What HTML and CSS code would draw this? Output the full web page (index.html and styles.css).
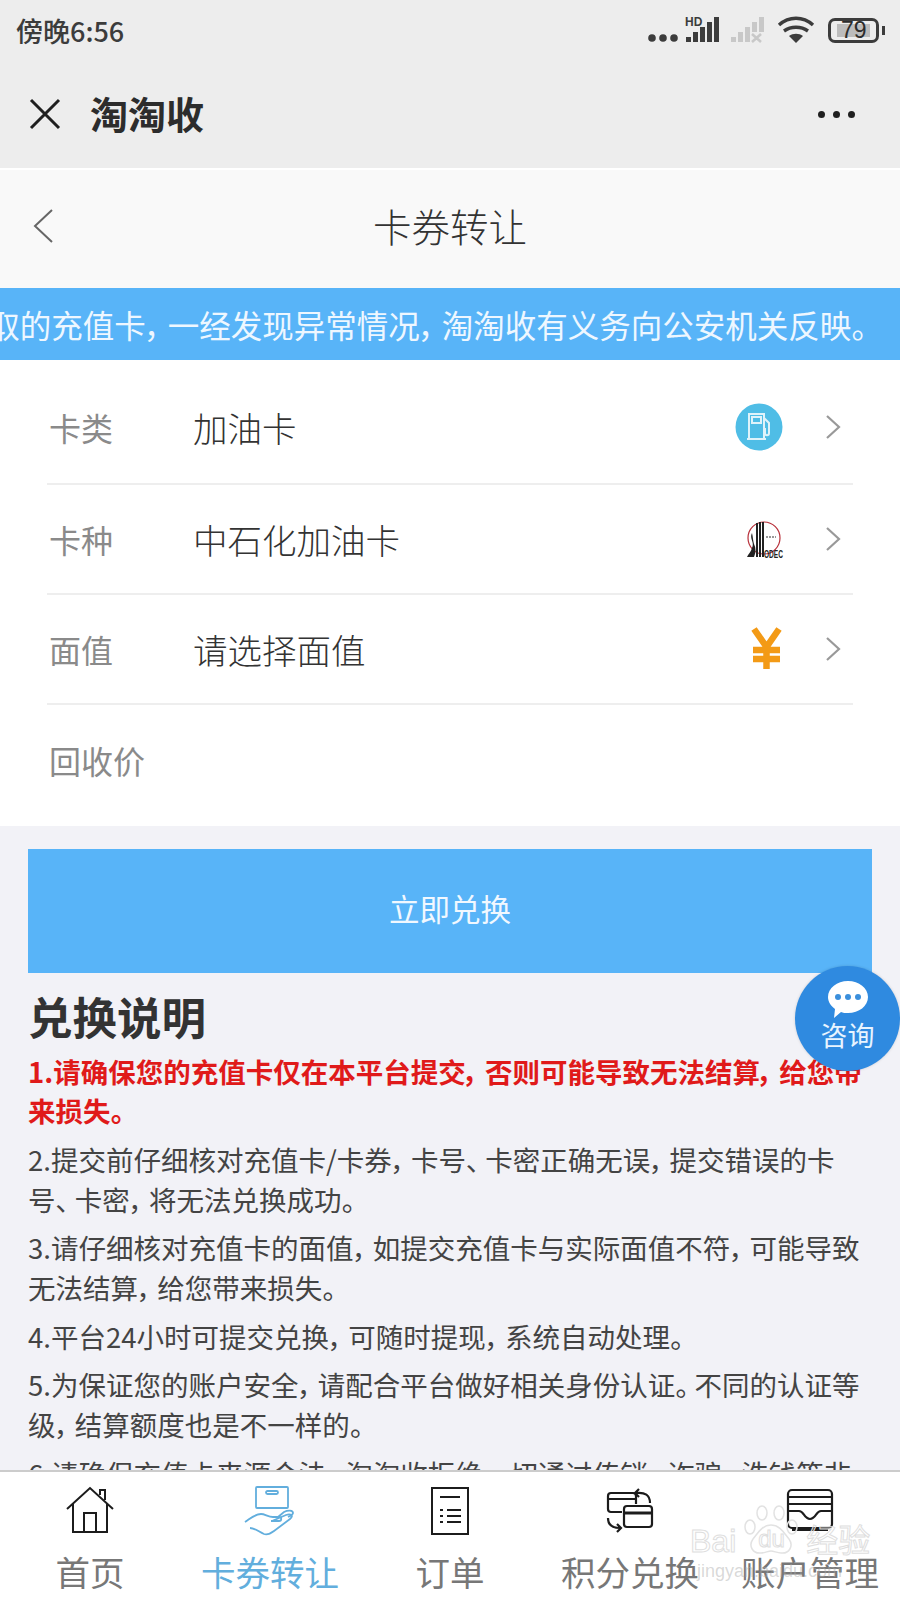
FILE: index.html
```html
<!DOCTYPE html>
<html lang="zh-CN">
<head>
  <meta charset="UTF-8">
  <meta name="viewport" content="width=device-width, initial-scale=1.0">
  <title>卡券转让</title>
  <link rel="stylesheet" href="styles.css">
</head>
<body>

<div class="phone">
  <div class="top">
    <div class="status">
      <span class="time">傍晚6:56</span>
      <svg class="status-icons" width="174" height="32" viewBox="0 0 174 32">
        <g fill="#3c3c3c">
          <circle cx="4" cy="24" r="3.800"/><circle cx="15" cy="24" r="3.800"/><circle cx="26" cy="24" r="3.800"/>
          <rect x="38" y="23" width="5" height="5"/><rect x="45" y="18" width="5" height="10"/><rect x="52" y="13" width="5" height="15"/><rect x="59" y="8" width="5" height="20"/><rect x="66" y="3" width="5" height="25"/>
        </g>
        <text x="37" y="12" class="hd">HD</text>
        <g fill="#c8c8c8">
          <rect x="83" y="23" width="5" height="5"/><rect x="90" y="18" width="5" height="10"/><rect x="97" y="13" width="5" height="15"/><rect x="104" y="8" width="5" height="10"/><rect x="111" y="3" width="5" height="15"/>
          <path d="M104 20l9 8M113 20l-9 8" stroke="#c8c8c8" stroke-width="2.600" fill="none"/>
        </g>
        <g fill="none" stroke="#3c3c3c" stroke-width="3.400">
          <path d="M131 11c10-9 24-9 34 0"/><path d="M136 17c7-5 17-5 24 0"/>
        </g>
        <path d="M141 22c4-3 10-3 14 0l-7 7z" fill="#3c3c3c"/>
      </svg>
      <div class="battery"><span class="battery-level"></span><span class="battery-num">79</span></div>
    </div>
    <div class="titlebar">
      <svg class="close-icon" width="32" height="32" viewBox="0 0 32 32"><path d="M2 2l28 28M30 2L2 30" stroke="#1f1f1f" stroke-width="3" fill="none"/></svg>
      <span class="app-name">淘淘收</span>
      <span class="more"><i></i><i></i><i></i></span>
    </div>
  </div>

  <div class="subhead">
    <svg class="back" width="22" height="36" viewBox="0 0 22 36"><path d="M20 2L3 18l17 16" stroke="#666" stroke-width="2" fill="none"/></svg>
    <h1>卡券转让</h1>
  </div>

  <div class="notice"><span>取的充值卡，&thinsp;一经发现异常情况，&thinsp;淘淘收有义务向公安机关反映。</span></div>

  <div class="form">
    <div class="row">
      <span class="label">卡类</span>
      <span class="value">加油卡</span>
      <svg class="row-icon" width="48" height="48" viewBox="0 0 48 48">
        <circle cx="20" cy="24" r="23.500" fill="#4fbde6"/>
        <g fill="none" stroke="#dff3fa" stroke-width="2">
          <path d="M10 35V11h15v24M8 36h19"/><rect x="13" y="14" width="9" height="6"/>
          <path d="M25 15l5 5v10c0 3-4 3-4 0v-4h-1"/>
        </g>
      </svg>
      <svg class="chevron" width="16" height="26" viewBox="0 0 16 26"><path d="M2 2l12 11L2 24" stroke="#999" stroke-width="2.200" fill="none"/></svg>
    </div>
    <div class="row">
      <span class="label">卡种</span>
      <span class="value">中石化加油卡</span>
      <svg class="row-icon" width="48" height="48" viewBox="0 0 48 48">
        <circle cx="25" cy="23" r="16" fill="#fff" stroke="#b8303a" stroke-width="1.200"/>
        <path d="M13 18c-3 6 3 9 0 15-1 4-4 6-5 9h7c2-5 2-9 0-13-1-3-1-7-2-11z" fill="#222"/>
        <path d="M18 8v34M21 7v35M24 7v35" stroke="#222" stroke-width="2"/>
        <text x="25" y="43" class="sinopec" textLength="19" lengthAdjust="spacingAndGlyphs">ODEC</text>
        <path d="M27 22h10" stroke="#777" stroke-width="1.500" stroke-dasharray="2 1"/>
      </svg>
      <svg class="chevron" width="16" height="26" viewBox="0 0 16 26"><path d="M2 2l12 11L2 24" stroke="#999" stroke-width="2.200" fill="none"/></svg>
    </div>
    <div class="row">
      <span class="label">面值</span>
      <span class="value">请选择面值</span>
      <svg class="row-icon" width="48" height="48" viewBox="0 0 48 48">
        <path d="M15 4l12.500 18L40 4M27.500 22v22M14 25h27M14 34h27" stroke="#f39a16" stroke-width="6.500" fill="none"/>
      </svg>
      <svg class="chevron" width="16" height="26" viewBox="0 0 16 26"><path d="M2 2l12 11L2 24" stroke="#999" stroke-width="2.200" fill="none"/></svg>
    </div>
    <div class="row">
      <span class="label">回收价</span>
    </div>
  </div>

  <div class="content">
    <button class="submit">立即兑换</button>
    <h2>兑换说明</h2>
    <p class="warn">1.请确保您的充值卡仅在本平台提交，&thinsp;否则可能导致无法结算，&thinsp;给您带来损失。</p>
    <p>2.提交前仔细核对充值卡/卡券，&thinsp;卡号、&thinsp;卡密正确无误，&thinsp;提交错误的卡号、&thinsp;卡密，&thinsp;将无法兑换成功。</p>
    <p>3.请仔细核对充值卡的面值，&thinsp;如提交充值卡与实际面值不符，&thinsp;可能导致无法结算，&thinsp;给您带来损失。</p>
    <p>4.平台24小时可提交兑换，&thinsp;可随时提现，&thinsp;系统自动处理。</p>
    <p>5.为保证您的账户安全，&thinsp;请配合平台做好相关身份认证。&thinsp;不同的认证等级，&thinsp;结算额度也是不一样的。</p>
    <p>6.请确保充值卡来源合法，&thinsp;淘淘收拒绝一切通过传销、&thinsp;诈骗、&thinsp;洗钱等非法途径获取的充值卡。</p>
  </div>

  <div class="consult">
    <svg width="42" height="40" viewBox="0 0 42 40">
      <path d="M21 1c11 0 20 7 20 16s-9 16-20 16c-3 0-5 0-7-1l-7 6 1-9C4 26 1 22 1 17 1 8 10 1 21 1z" fill="#fff"/>
      <circle cx="11" cy="17" r="3" fill="#3b8fdc"/><circle cx="21" cy="17" r="3" fill="#3b8fdc"/><circle cx="31" cy="17" r="3" fill="#3b8fdc"/>
    </svg>
    <span>咨询</span>
  </div>

  <nav class="tabs">
    <div class="tab">
      <svg width="50" height="50" viewBox="0 0 50 50" fill="none" stroke="#1c1c1c" stroke-width="2">
        <path d="M2 23L25 2l23 21M8 18v28h34V18M19 46V27h12v19M35 9V4h5v10"/>
      </svg>
      <span>首页</span>
    </div>
    <div class="tab active">
      <svg width="52" height="52" viewBox="0 0 52 52" fill="none" stroke="#62aedd" stroke-width="1.800">
        <rect x="12" y="2" width="32" height="21" rx="1"/><rect x="22" y="6" width="12" height="3" rx="1.500"/>
        <path d="M1 37c6-4 10-8 16-8 4 0 7 3 12 3h6c3 0 3 4 0 4h-8M28 36l14-6c5-2 8 1 4 4L30 46c-4 3-7 4-10 3-5-2-9-6-14-6M34 32l6-5c4-2 9-2 9 1 0 2-3 3-5 4"/>
      </svg>
      <span>卡券转让</span>
    </div>
    <div class="tab">
      <svg width="40" height="50" viewBox="0 0 40 50" fill="none" stroke="#1c1c1c" stroke-width="2">
        <rect x="2" y="2" width="36" height="46"/>
        <path d="M10 11h20M10 24h3M17 24h14M10 30h3M17 30h14M10 36h3M17 36h14"/>
      </svg>
      <span>订单</span>
    </div>
    <div class="tab">
      <svg width="48" height="48" viewBox="0 0 48 48" fill="none" stroke="#1c1c1c" stroke-width="2.200">
        <path d="M16 25H5a3 3 0 0 1-3-3V9a3 3 0 0 1 3-3h22a3 3 0 0 1 3 3v8M2 12h28"/>
        <rect x="18" y="19" width="28" height="21" rx="3"/><path d="M18 26h28" stroke-width="3"/>
        <path d="M33 2l-4 4 4 4M30 6c9-1 14 2 14 10M2 31c0 7 4 10 12 10M11 37l4 4-4 4"/>
      </svg>
      <span>积分兑换</span>
    </div>
    <div class="tab">
      <svg width="48" height="46" viewBox="0 0 48 46" fill="none" stroke="#1c1c1c" stroke-width="2.200">
        <rect x="2" y="2" width="44" height="38" rx="4"/>
        <path d="M2 9h44M2 16h44M2 23h11c5 0 5 8 11 8s6-8 11-8h11M6 42h36"/>
      </svg>
      <span>账户管理</span>
    </div>
  </nav>

  <div class="watermark">
    <div class="wm-logo">
      <span>Bai</span>
      <span class="wm-paw">
        <svg width="58" height="54" viewBox="0 0 58 54" fill="none" stroke="#e2e2e2" stroke-width="1.500">
          <ellipse cx="8" cy="24" rx="5" ry="7"/><ellipse cx="20" cy="10" rx="5" ry="7"/><ellipse cx="37" cy="10" rx="5" ry="7"/><ellipse cx="50" cy="24" rx="5" ry="7"/>
          <path d="M29 22c9 0 13 8 18 14 5 7 0 15-8 14-4 0-7-2-10-2s-6 2-10 2c-8 1-13-7-8-14 5-6 9-14 18-14z"/>
        </svg>
        <b>du</b>
      </span>
      <span>经验</span>
    </div>
    <span class="wm-url">jingyan.baidu.com</span>
  </div>
</div>

</body>
</html>
```

FILE: styles.css
```css
body {
  margin: 0;
  padding: 0;
  background-color: #fff;
  font-family: "Noto Sans CJK SC", "Noto Sans", sans-serif;
  font-feature-settings: "palt";
}
h1, h2, p {
  margin: 0;
  font-weight: normal;
}
.phone {
  position: relative;
  width: 900px;
  height: 1600px;
  overflow: hidden;
  display: flex;
  flex-direction: column;
}

/* status bar and app title */
.top {
  height: 168px;
  flex: none;
  background-color: #ededed;
}
.status {
  height: 60px;
  display: flex;
  align-items: center;
  padding: 0 21px 0 16px;
  color: #3c3c3c;
}
.time {
  font-size: 27px;
  font-weight: 500;
  flex: 1;
}
.status-icons {
  margin-right: 6px;
}
.hd {
  font-family: "Liberation Sans", sans-serif;
  font-size: 12px;
  font-weight: bold;
  fill: #3c3c3c;
}
.battery {
  position: relative;
  width: 45px;
  height: 19px;
  border: 3px solid #3c3c3c;
  border-radius: 7px;
}
.battery::after {
  content: "";
  position: absolute;
  right: -9px;
  top: 5px;
  width: 3px;
  height: 9px;
  background-color: #3c3c3c;
}
.battery-level {
  position: absolute;
  left: 6px;
  top: 3px;
  width: 33px;
  height: 13px;
  background-color: #bcbcbc;
}
.battery-num {
  position: absolute;
  left: 10px;
  top: -5px;
  font-size: 23px;
  line-height: 28px;
  font-family: "Liberation Sans", sans-serif;
  color: #2c2c2c;
}
.titlebar {
  height: 108px;
  display: flex;
  align-items: center;
  padding: 0 45px 0 29px;
}
.app-name {
  flex: 1;
  margin-left: 29px;
  margin-bottom: 4px;
  font-size: 38px;
  font-weight: 700;
  color: #2c2c2c;
}
.more {
  display: flex;
  gap: 8px;
}
.more i {
  width: 7px;
  height: 7px;
  border-radius: 50%;
  background-color: #1f1f1f;
}

/* page header */
.subhead {
  position: relative;
  flex: none;
  height: 118px;
  margin-top: 2px;
  padding-bottom: 8px;
  box-sizing: border-box;
  display: flex;
  align-items: center;
  justify-content: center;
  background-color: #f9f9f9;
}
.subhead h1 {
  font-size: 38.500px;
  font-weight: 300;
  color: #333;
}
.back {
  position: absolute;
  left: 32px;
  top: 38px;
}
.notice {
  flex: none;
  height: 72px;
  display: flex;
  align-items: center;
  justify-content: flex-end;
  overflow: hidden;
  padding-right: 33px;
  background-color: #58b4f8;
  color: #eef7ff;
  font-size: 31.500px;
  white-space: nowrap;
}

/* form rows */
.form {
  flex: none;
  height: 466px;
  padding: 0 47px;
  box-sizing: border-box;
  background-color: #fff;
}
.row {
  height: 110px;
  display: flex;
  align-items: center;
  border-bottom: 2px solid #eee;
  box-sizing: border-box;
  padding-right: 12px;
}
.row:first-child {
  height: 125px;
  padding-top: 10px;
}
.row:last-child {
  height: 120px;
  padding-bottom: 10px;
  border-bottom: none;
}
.label {
  width: 144px;
  flex: none;
  padding-left: 2px;
  font-size: 32px;
  color: #8a8a8a;
}
.value {
  flex: 1;
  font-size: 34.500px;
  font-weight: 300;
  color: #333;
}
.row-icon {
  margin-right: 38px;
  overflow: visible;
}
.sinopec {
  font-family: "Liberation Sans", sans-serif;
  font-size: 10px;
  font-weight: bold;
  fill: #222;
}

/* button and instructions */
.content {
  flex: 1;
  min-height: 0;
  overflow: hidden;
  padding: 23px 28px 0;
  background-color: #f2f2f7;
  font-size: 27.500px;
  line-height: 40px;
  color: #444;
}
.submit {
  display: block;
  width: 100%;
  height: 124px;
  padding: 0 0 6px;
  border: none;
  background-color: #58b4f8;
  color: #f1f8ff;
  font-family: inherit;
  font-feature-settings: inherit;
  font-size: 30.500px;
}
.content h2 {
  margin-top: 11px;
  margin-bottom: 4px;
  font-size: 44.500px;
  line-height: 64px;
  font-weight: 700;
  color: #333;
}
.content p {
  margin-bottom: 8.500px;
}
.content .warn {
  font-weight: 700;
  line-height: 39px;
  color: #e01a1a;
}

/* floating consult button */
.consult {
  position: absolute;
  left: 795px;
  top: 966px;
  width: 105px;
  height: 105px;
  border-radius: 50%;
  background-color: #2f8ae0;
  box-shadow: 0 0 3px rgba(0, 0, 0, 0.15);
  display: flex;
  flex-direction: column;
  align-items: center;
  color: #e8f4ff;
  font-size: 27px;
  line-height: 32px;
  padding-top: 14px;
  box-sizing: border-box;
}
.consult svg {
  margin-bottom: -1px;
}

/* bottom tabs */
.tabs {
  flex: none;
  height: 130px;
  box-sizing: border-box;
  border-top: 2px solid #ccc;
  display: grid;
  grid-template-columns: repeat(5, 1fr);
  background-color: #fff;
}
.tab {
  display: flex;
  flex-direction: column;
  align-items: center;
  color: #777;
  font-size: 34.500px;
  line-height: 46px;
  padding-top: 13px;
  white-space: nowrap;
}
.tab svg {
  height: 52px;
  margin-bottom: 11px;
}
.tab.active {
  color: #62aedd;
}

/* photo watermark */
.watermark {
  position: absolute;
  left: 690px;
  top: 1503px;
  display: flex;
  flex-direction: column;
  pointer-events: none;
}
.wm-logo {
  display: flex;
  align-items: flex-end;
  gap: 6px;
  font-size: 32px;
  line-height: 32px;
  font-family: "Liberation Sans", "Noto Sans CJK SC", sans-serif;
  color: rgba(255, 255, 255, 0.2);
  -webkit-text-stroke: 1px #dedede;
}
.wm-paw {
  position: relative;
  display: block;
  width: 58px;
  height: 54px;
}
.wm-paw b {
  position: absolute;
  left: 16px;
  bottom: 5px;
  font-weight: normal;
  font-size: 24px;
  line-height: 26px;
}
.wm-url {
  margin: 3px 0 0 7px;
  font-size: 18px;
  line-height: 22px;
  font-family: "Liberation Sans", sans-serif;
  color: rgba(170, 170, 170, 0.45);
}
```
